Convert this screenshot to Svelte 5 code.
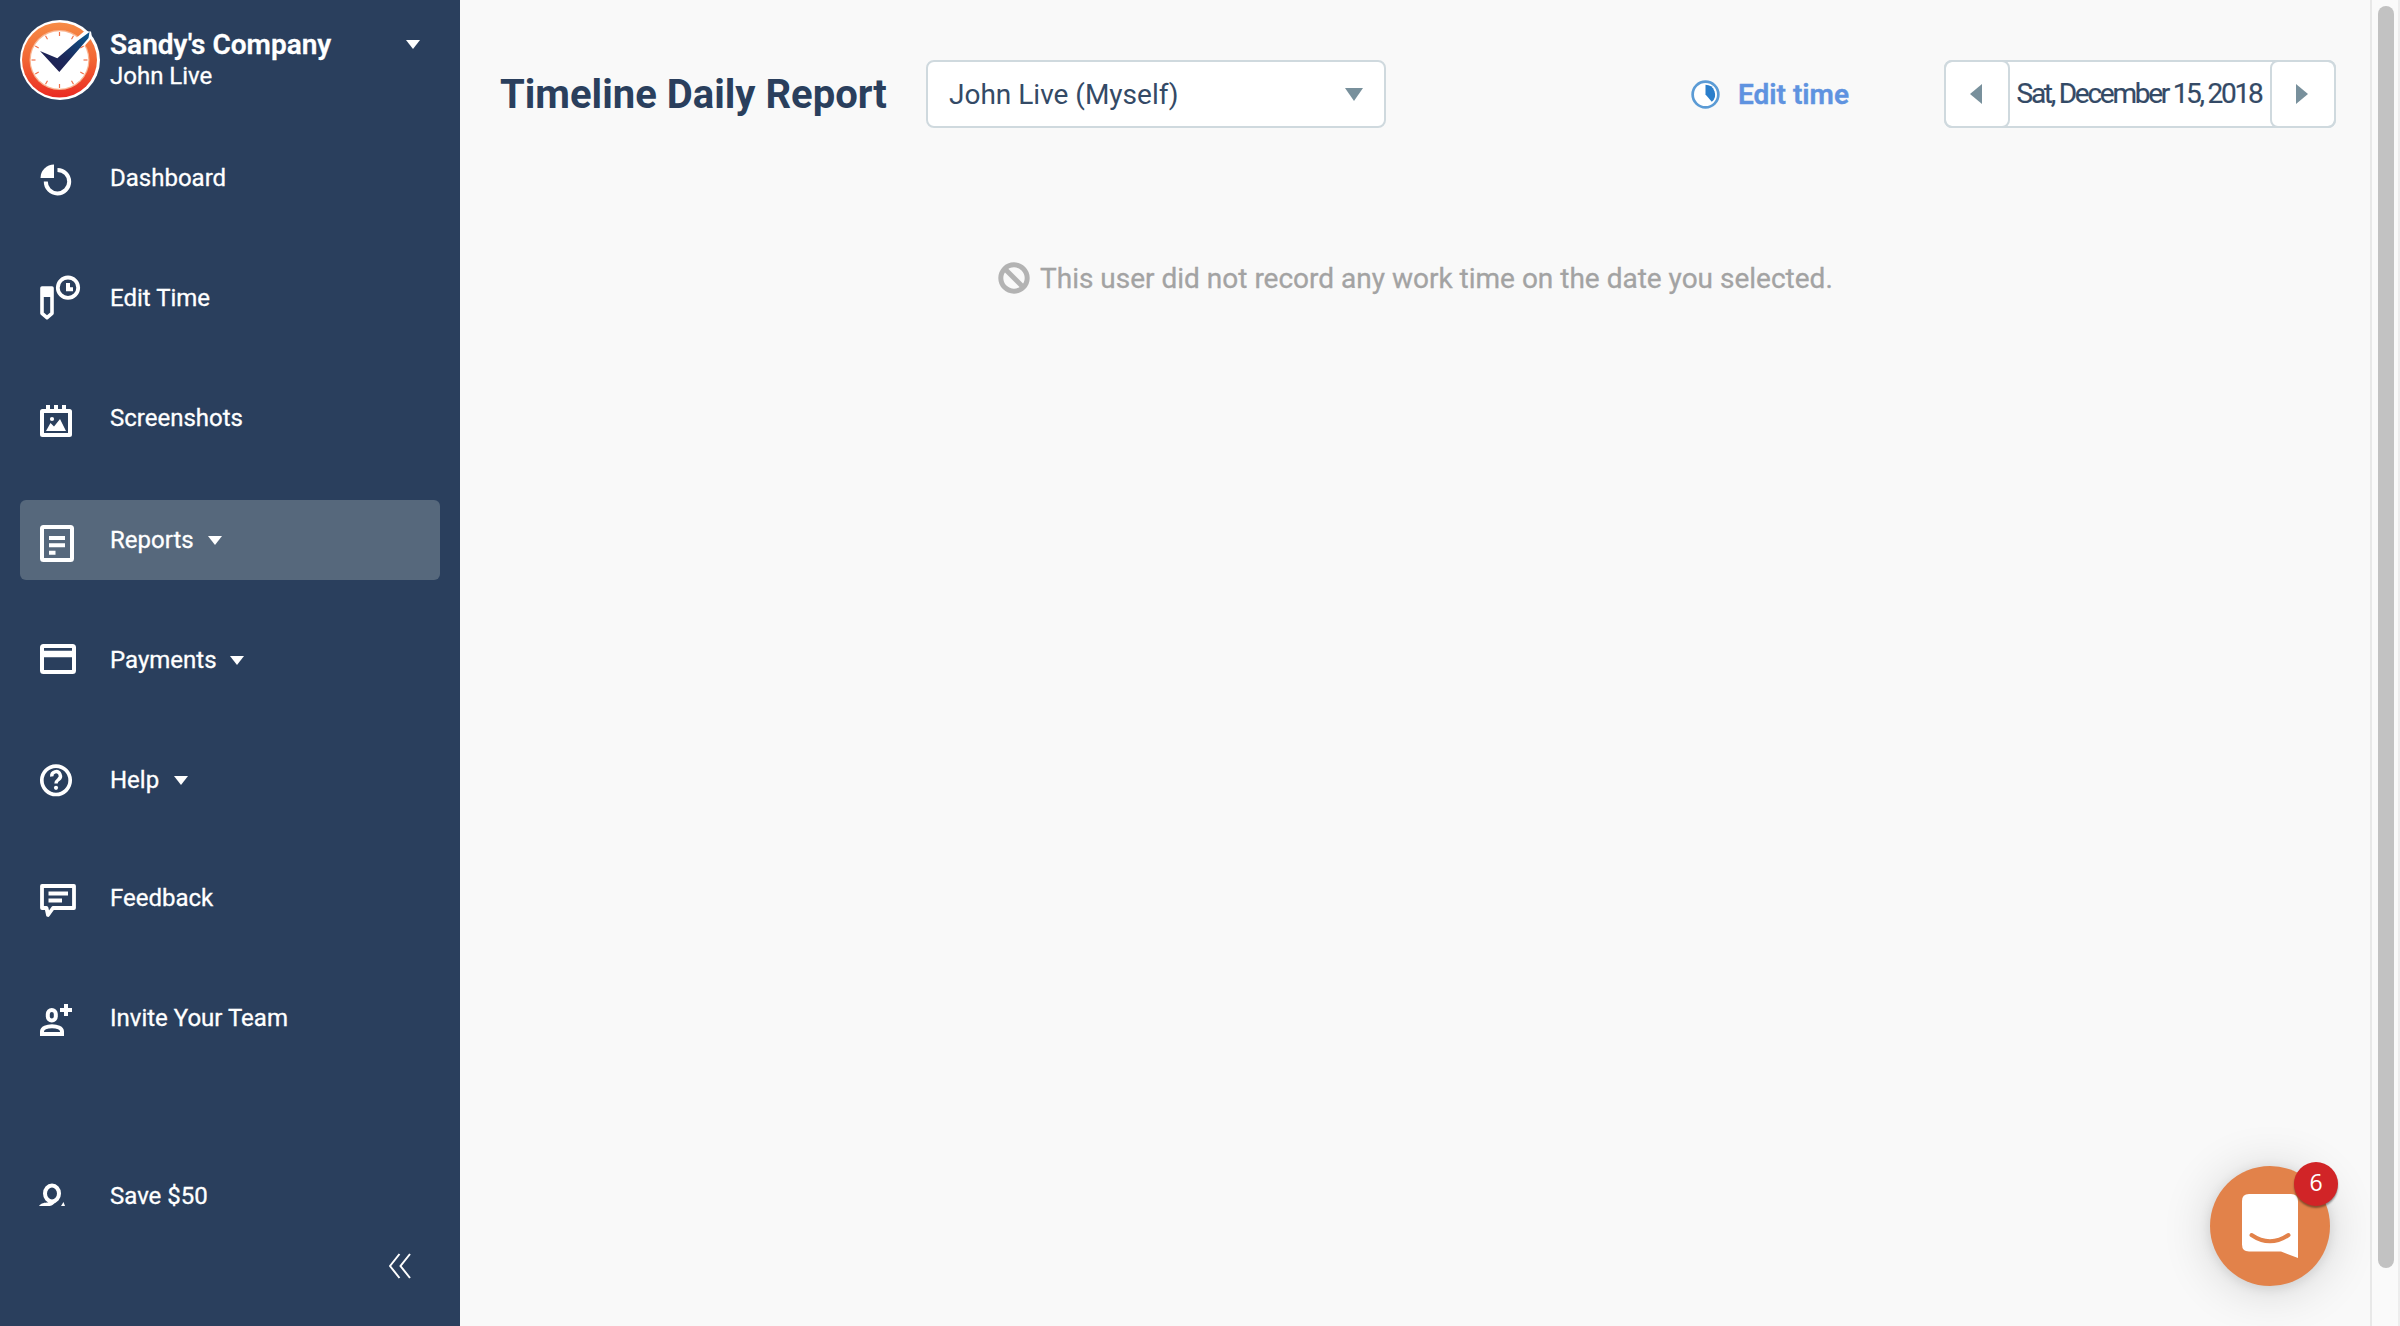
<script lang="ts">
  type Item = { label: string; icon: string; caret?: boolean; active?: boolean };
  const items: Item[] = [
    { label: 'Dashboard', icon: 'dashboard' },
    { label: 'Edit Time', icon: 'edit' },
    { label: 'Screenshots', icon: 'shots' },
    { label: 'Reports', icon: 'reports', caret: true, active: true },
    { label: 'Payments', icon: 'payments', caret: true },
    { label: 'Help', icon: 'help', caret: true },
    { label: 'Feedback', icon: 'feedback' },
    { label: 'Invite Your Team', icon: 'invite' },
    { label: 'Save $50', icon: 'save' }
  ];
  const ticks = [0, 30, 60, 90, 120, 150, 180, 210, 240, 270, 300, 330];
</script>

<div class="app">
  <aside class="sidebar">
    <header class="account">
      <svg class="logo" viewBox="0 0 80 80">
        <defs>
          <linearGradient id="ring" x1="0" y1="0" x2="0" y2="1">
            <stop offset="0" stop-color="#f68b45" />
            <stop offset="0.5" stop-color="#f26534" />
            <stop offset="1" stop-color="#ea2a22" />
          </linearGradient>
          <linearGradient id="tick" x1="0" y1="1" x2="1" y2="0">
            <stop offset="0" stop-color="#221b4e" />
            <stop offset="0.45" stop-color="#1b2a5c" />
            <stop offset="1" stop-color="#0b5a90" />
          </linearGradient>
        </defs>
        <circle cx="40" cy="40" r="40" fill="#fff" />
        <circle cx="39.500" cy="40" r="37.500" fill="url(#ring)" />
        <circle cx="39.500" cy="40" r="30" fill="#f9b591" />
        <circle cx="39.500" cy="40" r="28.800" fill="#fff" />
        {#each ticks as a}
          <path d="M39.500 12v4" stroke="#f0714a" stroke-width="1.200" transform="rotate({a} 39.500 40)" />
        {/each}
        <path d="M55 19L64 11.500H71L72 17.500L64.500 26Z" fill="#fff" />
        <path d="M20 31L37.300 38.200L58 20.500L69.500 12L68.500 18L39.300 52Z" fill="url(#tick)" />
      </svg>
      <div class="names">
        <strong>Sandy's Company</strong>
        <span>John Live</span>
      </div>
      <svg class="caret head-caret" viewBox="0 0 14 9"><path d="M0 0H14L7 9Z" /></svg>
    </header>

    <nav>
      {#each items as item}
        <a class="item {item.icon}" class:active={item.active}>
          <svg class="icon" viewBox="0 0 44 80" fill="none" stroke="#fff" stroke-width="4">
            {#if item.icon === 'dashboard'}
              <path d="M14 40V26.500A13.500 13.500 0 0 0 .5 40Z" fill="#fff" stroke="none" />
              <path d="M17.500 32A11.700 11.700 0 1 1 5.800 43.500" />
            {:else if item.icon === 'edit'}
              <path d="M2 30V55.300L7 59.700L12 55.300V30Z" stroke-width="3.600" stroke-linejoin="round" />
              <path d="M2 30H12V39H2Z" fill="#fff" stroke="none" />
              <circle cx="28" cy="29.700" r="10.200" stroke-width="3.800" />
              <path d="M28 25V31.200H33" stroke-width="4" />
            {:else if item.icon === 'shots'}
              <rect x="2" y="33" width="28" height="24" rx="0.500" />
              <path d="M8 27v5M16 27v5M24 27v5" />
              <circle cx="12" cy="41" r="2.100" fill="#fff" stroke="none" />
              <path d="M6 53L10.500 45L14 48.500L20 41L26 53Z" fill="#fff" stroke="none" />
            {:else if item.icon === 'reports'}
              <rect x="2" y="27" width="30" height="33" rx="1.500" />
              <path d="M9 38H25M9 45.300H25M9 52.700H15.500" />
            {:else if item.icon === 'payments'}
              <rect x="2" y="26" width="32" height="26" rx="1.500" />
              <path d="M2 34H34" stroke-width="6.500" />
            {:else if item.icon === 'help'}
              <circle cx="16" cy="40.300" r="14.200" stroke-width="3.700" />
              <path d="M11.800 36.500A4.300 4.300 0 1 1 18.500 39.500C16.800 40.800 16 41.500 16 43.500" stroke-width="3.400" />
              <circle cx="16" cy="47.800" r="2.100" fill="#fff" stroke="none" />
            {:else if item.icon === 'feedback'}
              <path d="M2 26H34V48H13L8 55L6.500 48H2Z" stroke-linejoin="round" stroke-width="3.800" transform="translate(0 2)" />
              <path d="M8.500 35.500H28M8.500 42.500H22" stroke-width="3.800" />
            {:else if item.icon === 'invite'}
              <rect x="7.800" y="32" width="8" height="10.500" rx="4" />
              <path d="M2 56V53.500C2 46.500 22 46.500 22 53.500V56Z" />
              <path d="M26 26V38M20 32H32" />
            {:else}
              <ellipse cx="12" cy="37.500" rx="7" ry="8" />
              <path d="M-1 50C1 47 5 46.500 8 46.500L11 44L16 45C14 49 11 50 9 50Z" fill="#fff" stroke="none" />
              <path d="M21 50L23.500 46L25 50Z" fill="#fff" stroke="none" />
            {/if}
          </svg>
          <span>{item.label}</span>
          {#if item.caret}
            <svg class="caret" viewBox="0 0 14 9"><path d="M0 0H14L7 9Z" /></svg>
          {/if}
        </a>
      {/each}
    </nav>

    <button class="collapse" aria-label="Collapse menu">
      <svg viewBox="0 0 22 26"><path d="M10.500 1L1 13L10.500 25M21 1L11.500 13L21 25" /></svg>
    </button>
  </aside>

  <main>
    <header class="bar">
      <h1>Timeline Daily Report</h1>
      <div class="select">
        <span>John Live (Myself)</span>
        <svg viewBox="0 0 18 13"><path d="M0 0H18L9 13Z" /></svg>
      </div>
      <div class="edit-link">
        <svg viewBox="0 0 30 30">
          <circle cx="15" cy="15" r="13.300" />
          <path d="M15 5A10 10 0 0 1 21.500 22.500L15 15Z" />
        </svg>
        <span>Edit time</span>
      </div>
      <div class="date">
        <button class="prev" aria-label="Previous day"><svg viewBox="0 0 12 20"><path d="M12 0V20L0 10Z" /></svg></button>
        <span>Sat, December 15, 2018</span>
        <button class="next" aria-label="Next day"><svg viewBox="0 0 12 20"><path d="M0 0V20L12 10Z" /></svg></button>
      </div>
    </header>
    <p class="empty">
      <svg viewBox="0 0 32 32"><circle cx="16" cy="16" r="13.200" /><path d="M7 7L25 25" /></svg>
      <span>This user did not record any work time on the date you selected.</span>
    </p>
  </main>

  <div class="scroll"><div class="thumb"></div></div>

  <div class="chat">
    <svg viewBox="0 0 56 64">
      <path class="bubble" d="M7 0H49Q56 0 56 7V64L39 57.500H7Q0 57.500 0 50.500V7Q0 0 7 0Z" />
      <path class="smile" d="M9.500 41Q28 53.500 46.500 41" />
    </svg>
    <span class="badge">6</span>
  </div>
</div>

<style>
  :global(body) { margin: 0; overflow: hidden; }
  .app {
    display: flex; position: relative; width: 2400px; height: 1326px;
    background: #f9f9f9; font-family: Roboto, sans-serif; overflow: hidden;
  }
  svg { display: block; flex: none; }
  button { border: 0; background: none; padding: 0; }
  .sidebar {
    width: 460px; flex: none; background: #2a3f5d; color: #fff;
    display: flex; flex-direction: column; box-sizing: border-box;
  }
  .account { display: flex; height: 118px; padding: 20px 40px 0 20px; box-sizing: border-box; }
  .logo { width: 80px; height: 80px; }
  .names { display: flex; flex-direction: column; margin-left: 10px; padding-top: 9px; flex: 1; }
  .names strong { font-size: 28px; line-height: 32px; font-weight: 600; -webkit-text-stroke: 0.3px #fff; }
  .names span { font-size: 24px; line-height: 30px; font-weight: 400; -webkit-text-stroke: 0.3px #fff; }
  .caret { width: 14px; height: 9px; fill: #fff; }
  .head-caret { margin-top: 20px; }
  nav { padding: 20px 20px 0; display: flex; flex-direction: column; gap: 40px; }
  .item {
    height: 80px; display: flex; align-items: center; border-radius: 6px;
    padding-left: 20px; font-size: 24px; -webkit-text-stroke: 0.3px #fff;
  }
  .active { background: #56687c; }
  .reports { margin-top: 2px; }
  .feedback { margin-top: -2px; }
  .save { margin-top: 58px; }
  .icon { width: 44px; height: 80px; margin-right: 26px; overflow: visible; }
  .item .caret { margin-left: 14px; }
  .help .caret { margin-left: 15px; }
  .payments .caret { margin-left: 13px; }
  .collapse { margin: 17px 0 0 389px; width: 22px; height: 26px; }
  .collapse svg { width: 22px; height: 26px; fill: none; stroke: #fff; stroke-width: 2; }
  main { flex: 1; min-width: 0; display: flex; flex-direction: column; }
  .bar { display: flex; align-items: center; padding: 60px 34px 0 40px; height: 68px; }
  h1 { margin: 0; padding-top: 2px; font-size: 40px; line-height: 48px; font-weight: 700; color: #2a3f5d; width: 426px; white-space: nowrap; }
  .select {
    width: 460px; height: 68px; box-sizing: border-box; border: 2px solid #cfd9de; border-radius: 8px;
    background: #fff; display: flex; align-items: center; justify-content: space-between;
    padding: 0 21px; font-size: 28px; color: #344a66;
  }
  .select svg { width: 18px; height: 13px; fill: #78909c; }
  .edit-link { margin-left: auto; display: flex; align-items: center; gap: 18px; font-size: 28px; font-weight: 600; color: #5f93e0; -webkit-text-stroke: 0.4px #5f93e0; }
  .edit-link svg { width: 29px; height: 29px; }
  .edit-link circle { fill: #fff; stroke: #5b9bd5; stroke-width: 2.800; }
  .edit-link path { fill: #2a7ecb; }
  .date {
    margin-left: 95px; width: 392px; height: 68px; box-sizing: border-box; background: #fff;
    border-radius: 8px; display: flex; align-items: stretch; box-shadow: inset 0 0 0 2px #cfd9de;
    font-size: 28px; color: #344a66;
  }
  .date button { width: 66px; flex: none; border: 2px solid #cfd9de; border-radius: 8px; display: flex; align-items: center; justify-content: center; padding-right: 2px; }
  .date svg { width: 12px; height: 20px; fill: #78909c; }
  .date span { flex: 1; line-height: 68px; text-align: center; letter-spacing: -2.260px; text-indent: -2px; white-space: nowrap; -webkit-text-stroke: 0.2px #344a66; }
  .empty { margin: 130px 0 0 538px; display: flex; align-items: center; gap: 10px; height: 40px; font-size: 28px; color: #a3a3a3; -webkit-text-stroke: 0.3px #a3a3a3; }
  .empty svg { width: 32px; height: 32px; fill: none; stroke: #b3b3b3; stroke-width: 5; }
  .scroll { width: 30px; flex: none; background: #fafafa; border-left: 2px solid #e8e8e8; border-right: 2px solid #ededed; box-sizing: border-box; padding: 6px 4px 0 6px; }
  .thumb { width: 16px; height: 1262px; border-radius: 8px; background: #c2c2c2; }
  .chat {
    position: absolute; left: 2210px; top: 1166px; width: 120px; height: 120px; border-radius: 50%;
    background: #e2824a; box-shadow: 0 2px 12px rgba(0,0,0,.1), 0 4px 50px rgba(0,0,0,.16);
  }
  .chat svg { margin: 28px 0 0 32px; width: 56px; height: 64px; }
  .bubble { fill: #fff; }
  .smile { fill: none; stroke: #e2824a; stroke-width: 4; stroke-linecap: round; }
  .badge {
    position: absolute; left: 84px; top: -4px; width: 44px; height: 44px; border-radius: 50%;
    background: #d12427; color: #fff; font: 23px/40px "Open Sans", sans-serif; text-align: center; box-shadow: 0 2px 2px rgba(0,0,0,.4);
  }
</style>
